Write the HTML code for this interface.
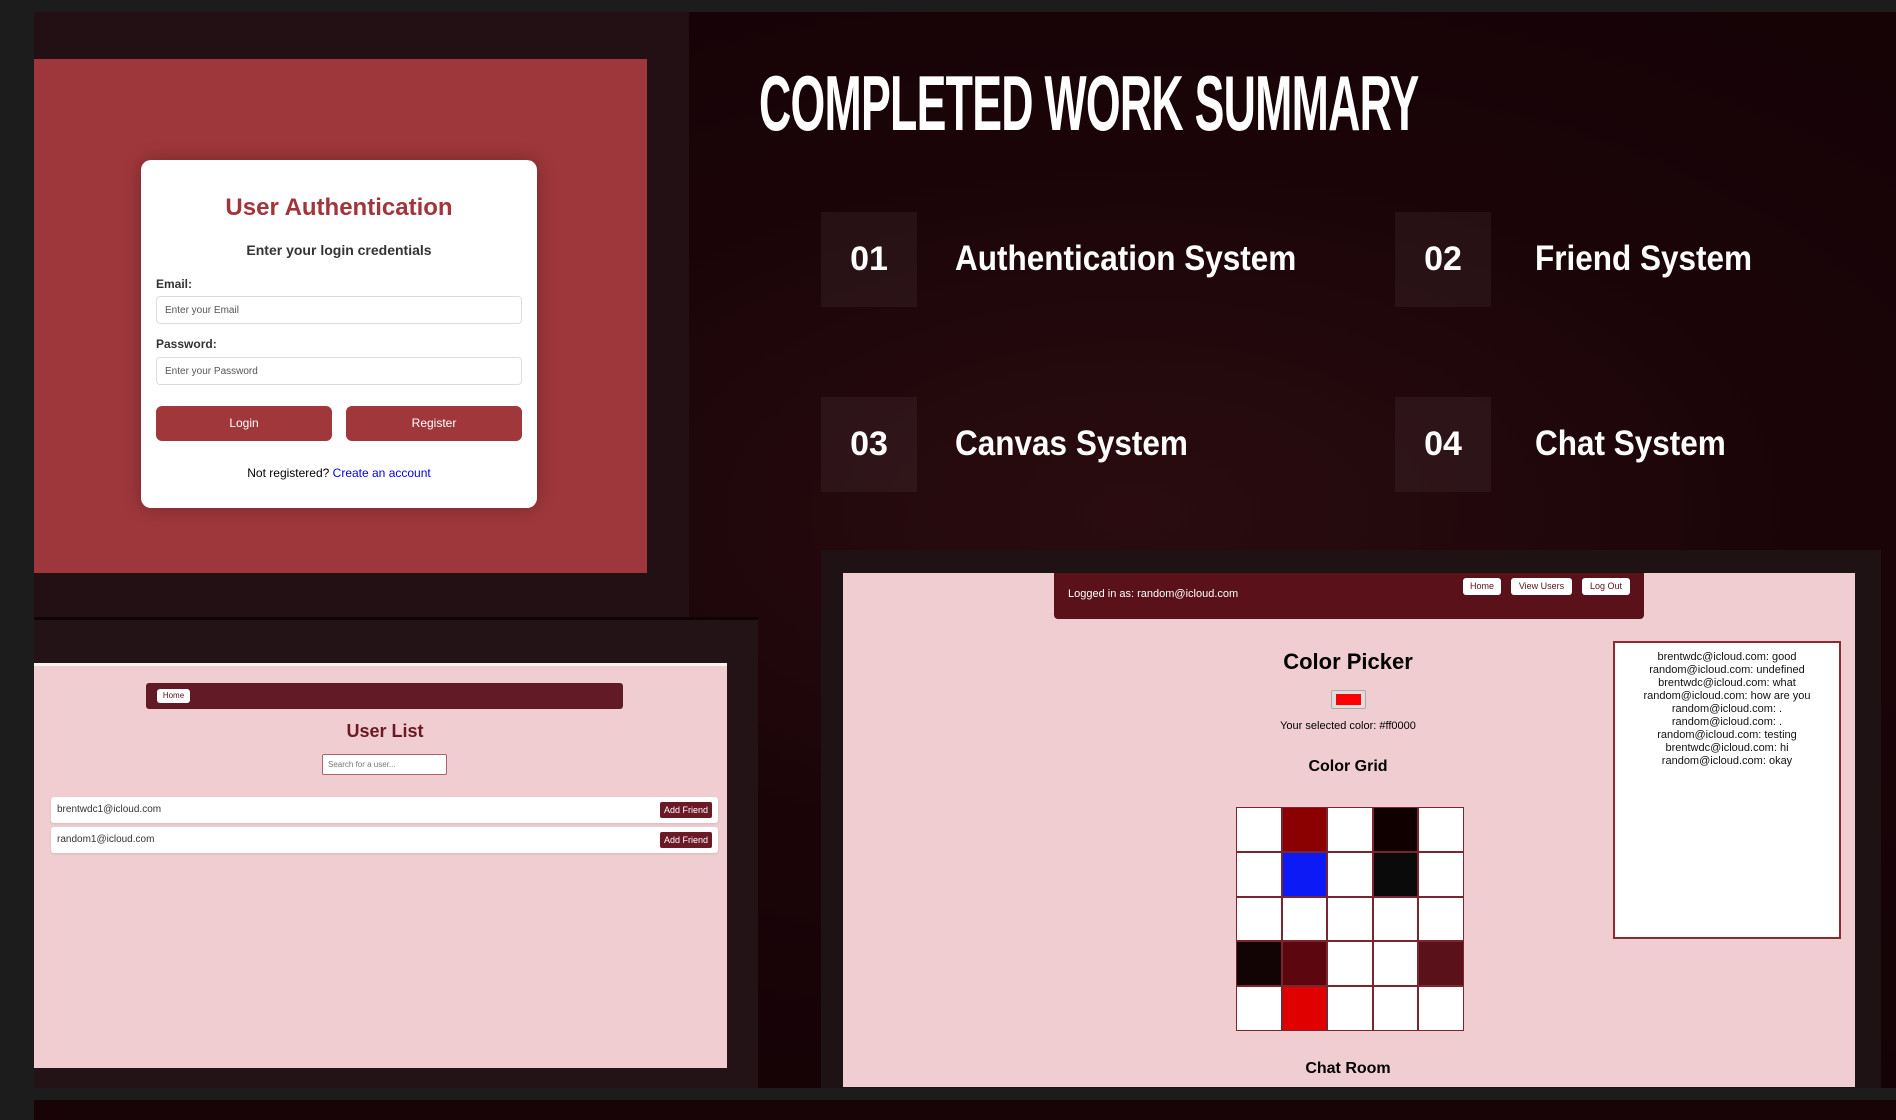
<!DOCTYPE html>
<html><head><meta charset="utf-8"><style>
*{margin:0;padding:0;box-sizing:border-box}
body{width:1896px;height:1120px;overflow:hidden;background:#1c1c1c;font-family:"Liberation Sans",Arial,sans-serif;position:relative}
.abs{position:absolute}
.bg{left:34px;top:12px;width:1862px;height:1076px;background:radial-gradient(ellipse at 1100px 500px,#2a0c10 0%,#1a0408 45%,#120205 100%)}
.bg2{left:34px;top:1100px;width:1862px;height:20px;background:#180307}
.lp{left:34px;top:12px;width:655px;height:605px;background:#231014}
.red{left:34px;top:59px;width:613px;height:514px;background:#9e373b}
.card{left:141px;top:160px;width:396px;height:348px;background:#fff;border-radius:10px;box-shadow:0 0 18px rgba(0,0,0,.25)}
.card .t{position:absolute;left:0;width:100%;text-align:center}
.lbl{position:absolute;left:15px;font-size:12px;font-weight:bold;color:#333}
.inp{position:absolute;left:15px;width:366px;height:28px;border:1px solid #ddd;border-radius:4px;font-size:10px;color:#555;padding:8px 8px}
.btn{position:absolute;top:246px;width:176px;height:35px;background:#a0373b;border-radius:6px;color:#fff;font-size:12px;text-align:center;line-height:35px}
.num{background:rgba(255,255,255,.05);width:96px;height:95px;color:#fff;font-weight:bold;font-size:34px;line-height:95px;text-align:center}
.lab{color:#fff;font-weight:bold;font-size:35px;line-height:40px;transform:scaleX(0.9);transform-origin:left top;white-space:nowrap}
.rp{left:821px;top:550px;width:1060px;height:538px;background:#1e1214}
.pink{background:#f0cdd0}
.nav{background:#5a1119;border-radius:0 0 4px 4px}
.sb{position:absolute;background:#fff;border-radius:3px;color:#5a1119;font-size:9px;text-align:center}
.grid{left:1236px;top:807px;width:228px;height:224px;display:grid;grid-template-columns:repeat(5,1fr);grid-template-rows:repeat(5,1fr);gap:2px;background:#7a2530;border:1px solid #7a2530}
.grid div{background:#fff}
.chat{left:1613px;top:641px;width:228px;height:298px;background:#fff;border:2px solid #8a2a34;text-align:center;font-size:11px;line-height:13px;color:#111;padding-top:8px}
.row{position:absolute;left:51px;width:667px;height:26px;background:#fff;border-radius:3px;box-shadow:0 1px 2px rgba(0,0,0,.1);font-size:10px;color:#333;line-height:26px;padding-left:6px}
.af{position:absolute;right:6px;top:5px;width:52px;height:16px;background:#6b1a25;color:#fff;font-size:9px;line-height:16px;text-align:center;border-radius:2px}
</style></head><body>
<div class="abs bg"></div>
<div class="abs bg2"></div>
<div class="abs lp"></div>
<div class="abs red"></div>
<div class="abs card">
 <div class="t" style="top:34px;font-size:24px;font-weight:bold;color:#a0353b">User Authentication</div>
 <div class="t" style="top:82px;font-size:14px;font-weight:bold;color:#333">Enter your login credentials</div>
 <div class="lbl" style="top:117px">Email:</div>
 <div class="inp" style="top:136px">Enter your Email</div>
 <div class="lbl" style="top:177px">Password:</div>
 <div class="inp" style="top:197px">Enter your Password</div>
 <div class="btn" style="left:15px">Login</div>
 <div class="btn" style="left:205px">Register</div>
 <div class="t" style="top:306px;font-size:12px;color:#000">Not registered? <span style="color:#00e">Create an account</span></div>
</div>

<div class="abs" style="left:759px;top:66px;color:#fff;font-weight:bold;font-size:62px;letter-spacing:-1px;transform:scale(0.72,1.25);transform-origin:top left;line-height:62px;white-space:nowrap">COMPLETED WORK SUMMARY</div>

<div class="abs num" style="left:821px;top:212px">01</div>
<div class="abs lab" style="left:955px;top:239px">Authentication System</div>
<div class="abs num" style="left:1395px;top:212px">02</div>
<div class="abs lab" style="left:1535px;top:239px">Friend System</div>
<div class="abs num" style="left:821px;top:397px">03</div>
<div class="abs lab" style="left:955px;top:424px">Canvas System</div>
<div class="abs num" style="left:1395px;top:397px">04</div>
<div class="abs lab" style="left:1535px;top:424px">Chat System</div>

<div class="abs rp"></div>
<div class="abs pink" style="left:843px;top:573px;width:1012px;height:514px"></div>
<div class="abs nav" style="left:1054px;top:573px;width:590px;height:46px"></div>
<div class="abs" style="left:1068px;top:588px;color:#fff;font-size:11px">Logged in as: random@icloud.com</div>
<div class="sb" style="left:1463px;top:578px;width:38px;height:17px;line-height:17px">Home</div>
<div class="sb" style="left:1511px;top:578px;width:61px;height:17px;line-height:17px">View Users</div>
<div class="sb" style="left:1582px;top:578px;width:48px;height:17px;line-height:17px">Log Out</div>
<div class="abs" style="left:1148px;top:649px;width:400px;text-align:center;font-size:22px;font-weight:bold">Color Picker</div>
<div class="abs" style="left:1331px;top:690px;width:35px;height:19px;background:#ddd;border:1px solid #aaa;border-radius:2px;padding:3px 4px"><div style="width:100%;height:100%;background:#f00"></div></div>
<div class="abs" style="left:1148px;top:720px;width:400px;text-align:center;font-size:11px">Your selected color: #ff0000</div>
<div class="abs" style="left:1148px;top:758px;width:400px;text-align:center;font-size:16px;font-weight:bold">Color Grid</div>
<div class="abs grid">
<div></div><div style="background:#8b0000"></div><div></div><div style="background:#100000"></div><div></div>
<div></div><div style="background:#0c1af5"></div><div></div><div style="background:#0a0a0a"></div><div></div>
<div></div><div></div><div></div><div></div><div></div>
<div style="background:#120404"></div><div style="background:#5c0710"></div><div></div><div></div><div style="background:#5a1119"></div>
<div></div><div style="background:#e00000"></div><div></div><div></div><div></div>
</div>
<div class="abs" style="left:1148px;top:1060px;width:400px;text-align:center;font-size:16px;font-weight:bold">Chat Room</div>
<div class="abs chat">brentwdc@icloud.com: good<br>random@icloud.com: undefined<br>brentwdc@icloud.com: what<br>random@icloud.com: how are you<br>random@icloud.com: .<br>random@icloud.com: .<br>random@icloud.com: testing<br>brentwdc@icloud.com: hi<br>random@icloud.com: okay</div>

<div class="abs" style="left:34px;top:617px;width:724px;height:3px;background:#0e0406"></div>
<div class="abs" style="left:34px;top:620px;width:724px;height:468px;background:#231216"></div>
<div class="abs pink" style="left:34px;top:663px;width:693px;height:405px;border-top:3px solid #f7f1f2"></div>
<div class="abs nav" style="left:146px;top:683px;width:477px;height:26px;background:#611a26;border-radius:3px"></div>
<div class="sb" style="left:157px;top:689px;width:33px;height:14px;line-height:14px;font-size:8px">Home</div>
<div class="abs" style="left:180px;top:721px;width:410px;text-align:center;font-size:18px;font-weight:bold;color:#6b1a25">User List</div>
<div class="abs" style="left:322px;top:754px;width:125px;height:21px;background:#fff;border:1px solid #b06070;border-radius:2px;font-size:8px;color:#777;padding:5px 5px">Search for a user...</div>
<div class="row" style="top:797px">brentwdc1@icloud.com<div class="af">Add Friend</div></div>
<div class="row" style="top:827px">random1@icloud.com<div class="af">Add Friend</div></div>
</body></html>
